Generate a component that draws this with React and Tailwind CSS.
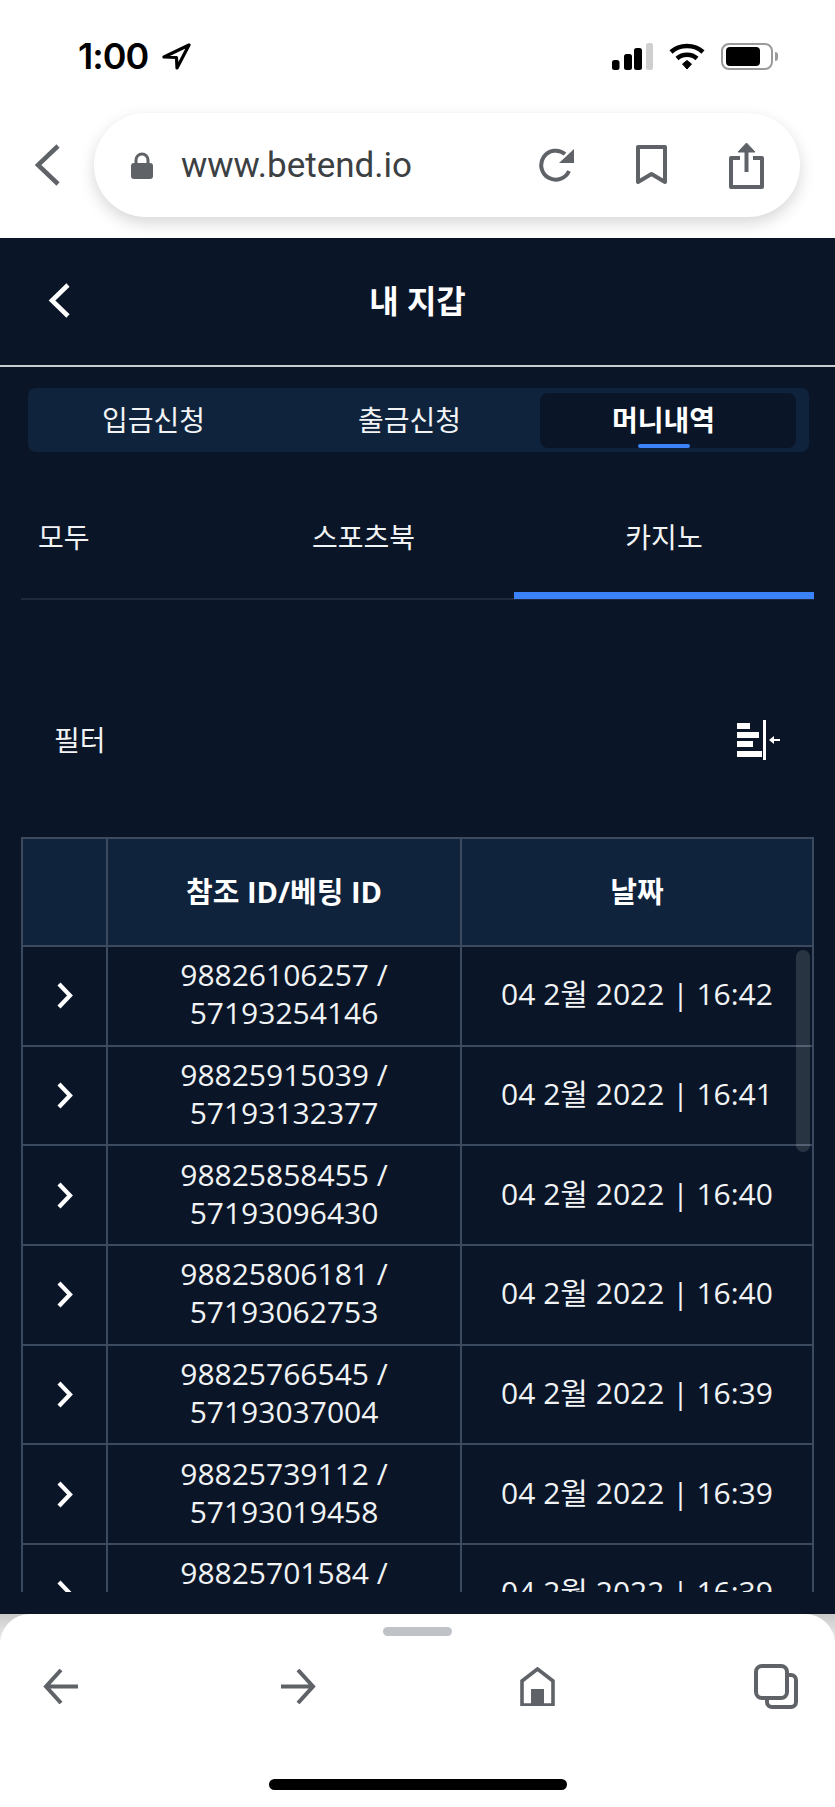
const rows = [
  ['98826106257', '57193254146', '16:42'],
  ['98825915039', '57193132377', '16:41'],
  ['98825858455', '57193096430', '16:40'],
  ['98825806181', '57193062753', '16:40'],
  ['98825766545', '57193037004', '16:39'],
  ['98825739112', '57193019458', '16:39'],
  ['98825701584', '57192994120', '16:39'],
]

function StatusBar() {
  return (
    <div className="mt-[42px] flex h-[28px] items-center justify-between pl-[78px] pr-[57px]">
      <div className="flex items-center gap-[14px]">
        <span className="font-['Inter',sans-serif] text-[36px] leading-none font-semibold tracking-[-1px] text-black">1:00</span>
        <svg width="29" height="27" viewBox="0 0 29 27" fill="none" stroke="#000" strokeWidth="3.2" strokeLinejoin="round">
          <path d="M27 2 L2 14 L14.5 14.5 L15 25 Z" />
        </svg>
      </div>
      <div className="flex items-center gap-[16px]">
        <svg width="41" height="27" viewBox="0 0 41 27">
          <rect x="0" y="17" width="7.5" height="10" rx="2.5" fill="#000" />
          <rect x="12" y="11" width="8" height="16" rx="2.5" fill="#000" />
          <rect x="22" y="5" width="8" height="22" rx="2.5" fill="#000" />
          <rect x="34" y="0" width="7" height="27" rx="2.5" fill="#cfcfcf" />
        </svg>
        <svg width="36" height="27" viewBox="0 0 36 27" fill="none" stroke="#000" strokeWidth="4.5">
          <path d="M2 9 C10.5 1 25.5 1 34 9" />
          <path d="M8 15.5 C13.5 10.5 22.5 10.5 28 15.5" />
          <path d="M13.5 21 L18 17.5 L22.5 21 L18 26 Z" fill="#000" strokeWidth="1" />
        </svg>
        <div className="flex items-center gap-[2px]">
          <div className="flex h-[27px] w-[52px] items-center rounded-[8px] border-2 border-[#9a9a9a] pl-[3px]">
            <div className="h-[19px] w-[34px] rounded-[4px] bg-black" />
          </div>
          <div className="h-[9px] w-[3px] rounded-r-full bg-[#9a9a9a]" />
        </div>
      </div>
    </div>
  )
}

function UrlBar() {
  return (
    <div className="mt-[43px] flex items-center pl-[35px]">
      <svg width="25" height="42" viewBox="0 0 25 42" fill="none" stroke="#5f6368" strokeWidth="4.5">
        <path d="M23 2 L3 21 L23 40" />
      </svg>
      <div className="ml-[34px] flex h-[104px] w-[706px] items-center rounded-[52px] bg-white pl-[36px] shadow-[0_6px_16px_rgba(0,0,0,0.16)]">
        <svg className="shrink-0" width="24" height="27" viewBox="0 0 24 27" fill="none">
          <path d="M6 12 V8 a6 6 0 0 1 12 0 V12" stroke="#5f6368" strokeWidth="3" />
          <rect x="1" y="11" width="22" height="16" rx="3" fill="#5f6368" />
        </svg>
        <span className="ml-[27px] w-[229px] shrink-0 font-['Roboto',sans-serif] text-[35px] leading-none whitespace-nowrap text-[#3c4043]">www.betend.io</span>
        <svg className="ml-[129px] shrink-0" width="36" height="36" viewBox="0 0 36 36" fill="none">
          <path d="M30 24 A14.5 14.5 0 1 1 26 7" stroke="#5f6368" strokeWidth="4" />
          <path d="M35 2 V16 H20 Z" fill="#5f6368" />
        </svg>
        <svg className="ml-[61px] shrink-0" width="31" height="40" viewBox="0 0 31 40" fill="none" stroke="#5f6368" strokeWidth="4" strokeLinejoin="round">
          <path d="M2 2 H29 V37 L15.5 29 L2 37 Z" />
        </svg>
        <svg className="ml-[62px] shrink-0" width="35" height="47" viewBox="0 0 35 47" fill="none" stroke="#5f6368" strokeWidth="4">
          <path d="M17.5 30 V3" />
          <path d="M17.5 1 L26 10 H9 Z" fill="#5f6368" strokeWidth="1" />
          <path d="M11 16 H2 V45 H33 V16 H24" strokeLinejoin="round" />
        </svg>
      </div>
    </div>
  )
}

function WalletTabs() {
  return (
    <div className="mt-[21px] ml-[28px] grid h-[64px] w-[781px] grid-cols-[251px_261px_256px] items-center rounded-[8px] bg-[#10233d] pr-[13px] text-[28px] text-[#f1f3f5]">
      <span className="text-center">입금신청</span>
      <span className="text-center">출금신청</span>
      <div className="relative flex h-[55px] items-center justify-center rounded-[8px] bg-[#0a1628] pr-[9px] font-bold text-white">
        머니내역
        <div className="absolute bottom-0 left-[98px] h-[4px] w-[52px] rounded-[2px] bg-[#3b82f6]" />
      </div>
    </div>
  )
}

function TypeTabs() {
  return (
    <div className="mx-[21px] mt-[52px] grid h-[96px] grid-cols-[192px_301px_300px] border-b-2 border-[#1e2a3c] text-[28px] text-[#f1f3f5]">
      <span className="pl-[17px] leading-[66px]">모두</span>
      <span className="text-center leading-[66px]">스포츠북</span>
      <span className="-mb-[1px] border-b-[7px] border-[#3b82f6] text-center leading-[66px]">카지노</span>
    </div>
  )
}

function FilterRow() {
  return (
    <div className="mt-[118px] flex h-[44px] items-center justify-between pl-[54px] pr-[55px] text-[28px] text-[#f1f3f5]">
      <span>필터</span>
      <svg width="44" height="40" viewBox="0 0 44 40" fill="#fff">
        <rect x="1" y="3" width="13" height="6" />
        <rect x="1" y="12" width="22" height="6" />
        <rect x="1" y="21" width="16" height="6" />
        <rect x="1" y="31" width="25" height="6" />
        <rect x="27" y="0" width="3" height="40" />
        <path d="M33 20 L38 16 V19 H44 V21 H38 V24 Z" />
      </svg>
    </div>
  )
}

function HistoryTable() {
  return (
    <div className="relative mx-[21px] mt-[75px] h-[755px] overflow-hidden">
      <div className="border-x-2 border-t-2 border-[#3b4a5e]">
        <div className="grid h-[106px] grid-cols-[85px_354px_1fr] items-center bg-[#10233d] text-center text-[29px] font-bold text-white">
          <div className="h-full border-r-2 border-[#3b4a5e]" />
          <div className="flex h-full items-center justify-center border-r-2 border-[#3b4a5e]">참조 ID/베팅 ID</div>
          <div>날짜</div>
        </div>
        {rows.map(([refId, betId, time]) => (
          <div key={refId} className="grid h-[99.7px] grid-cols-[85px_354px_1fr] border-t-2 border-[#3b4a5e] text-center text-[30px] leading-[38px] text-[#f1f3f5]">
            <div className="flex items-center justify-center border-r-2 border-[#3b4a5e]">
              <svg width="18" height="27" viewBox="0 0 18 27" fill="none" stroke="#fff" strokeWidth="4.2">
                <path d="M3 2 L14 13.5 L3 25" />
              </svg>
            </div>
            <div className="flex flex-col justify-center border-r-2 border-[#3b4a5e] pb-[3px]">
              <span>{refId} /</span>
              <span>{betId}</span>
            </div>
            <div className="flex items-center justify-center pb-[3px]">04 2월 2022 | {time}</div>
          </div>
        ))}
      </div>
      <div className="absolute top-[113px] right-[4px] h-[202px] w-[14px] rounded-full bg-[rgba(255,255,255,0.13)]" />
    </div>
  )
}

function BottomBar() {
  return (
    <div className="flex-1 bg-gradient-to-b from-[#c9c9c9] to-white to-[40px]">
      <div className="flex h-full flex-col items-center rounded-t-[30px] bg-white">
        <div className="mt-[13px] h-[9px] w-[69px] rounded-full bg-[#bfc3c8]" />
        <div className="mt-[28px] flex w-full items-center pl-[43px]">
          <svg width="35" height="35" viewBox="0 0 35 35" fill="none" stroke="#5f6368" strokeWidth="4">
            <path d="M18 1 L3 17.5 L18 34 M3 17.5 H35" />
          </svg>
          <svg className="ml-[203px]" width="35" height="35" viewBox="0 0 35 35" fill="none" stroke="#5f6368" strokeWidth="4">
            <path d="M17 1 L32 17.5 L17 34 M32 17.5 H0" />
          </svg>
          <svg className="ml-[204px]" width="35" height="39" viewBox="0 0 35 39" fill="none">
            <path d="M2 38 V14 L17.5 2 L33 14 V38 Z" stroke="#5f6368" strokeWidth="3.6" />
            <rect x="11" y="22" width="13" height="16" fill="#5f6368" />
          </svg>
          <svg className="ml-[199px]" width="44" height="45" viewBox="0 0 44 45" fill="none" stroke="#5f6368" strokeWidth="4">
            <rect x="2" y="2" width="31" height="32" rx="6" />
            <path d="M33 11 H37 a5 5 0 0 1 5 5 V38 a5 5 0 0 1 -5 5 H18 a5 5 0 0 1 -5 -5 V34" />
          </svg>
        </div>
        <div className="mt-[70px] h-[11px] w-[298px] rounded-full bg-black" />
      </div>
    </div>
  )
}

export default function App() {
  return (
    <div className="flex h-[1807px] w-[835px] flex-col overflow-hidden bg-white font-['Open_Sans','Noto_Sans_CJK_KR',sans-serif]">
      <div className="relative z-10 h-[238px] shrink-0">
        <StatusBar />
        <UrlBar />
      </div>
      <div className="h-[1376px] shrink-0 bg-[#0a1628]">
        <div className="flex h-[127px] items-center justify-center pb-[2px]">
          <div className="relative flex w-full items-center justify-center">
            <svg className="absolute left-[48px]" width="23" height="35" viewBox="0 0 23 35" fill="none" stroke="#fff" strokeWidth="4.6">
              <path d="M20 2 L4 17.5 L20 33" />
            </svg>
            <span className="text-[32px] font-bold text-white">내 지갑</span>
          </div>
        </div>
        <div className="h-[2px] bg-[#c9cbcd]" />
        <WalletTabs />
        <TypeTabs />
        <FilterRow />
        <HistoryTable />
      </div>
      <BottomBar />
    </div>
  )
}
